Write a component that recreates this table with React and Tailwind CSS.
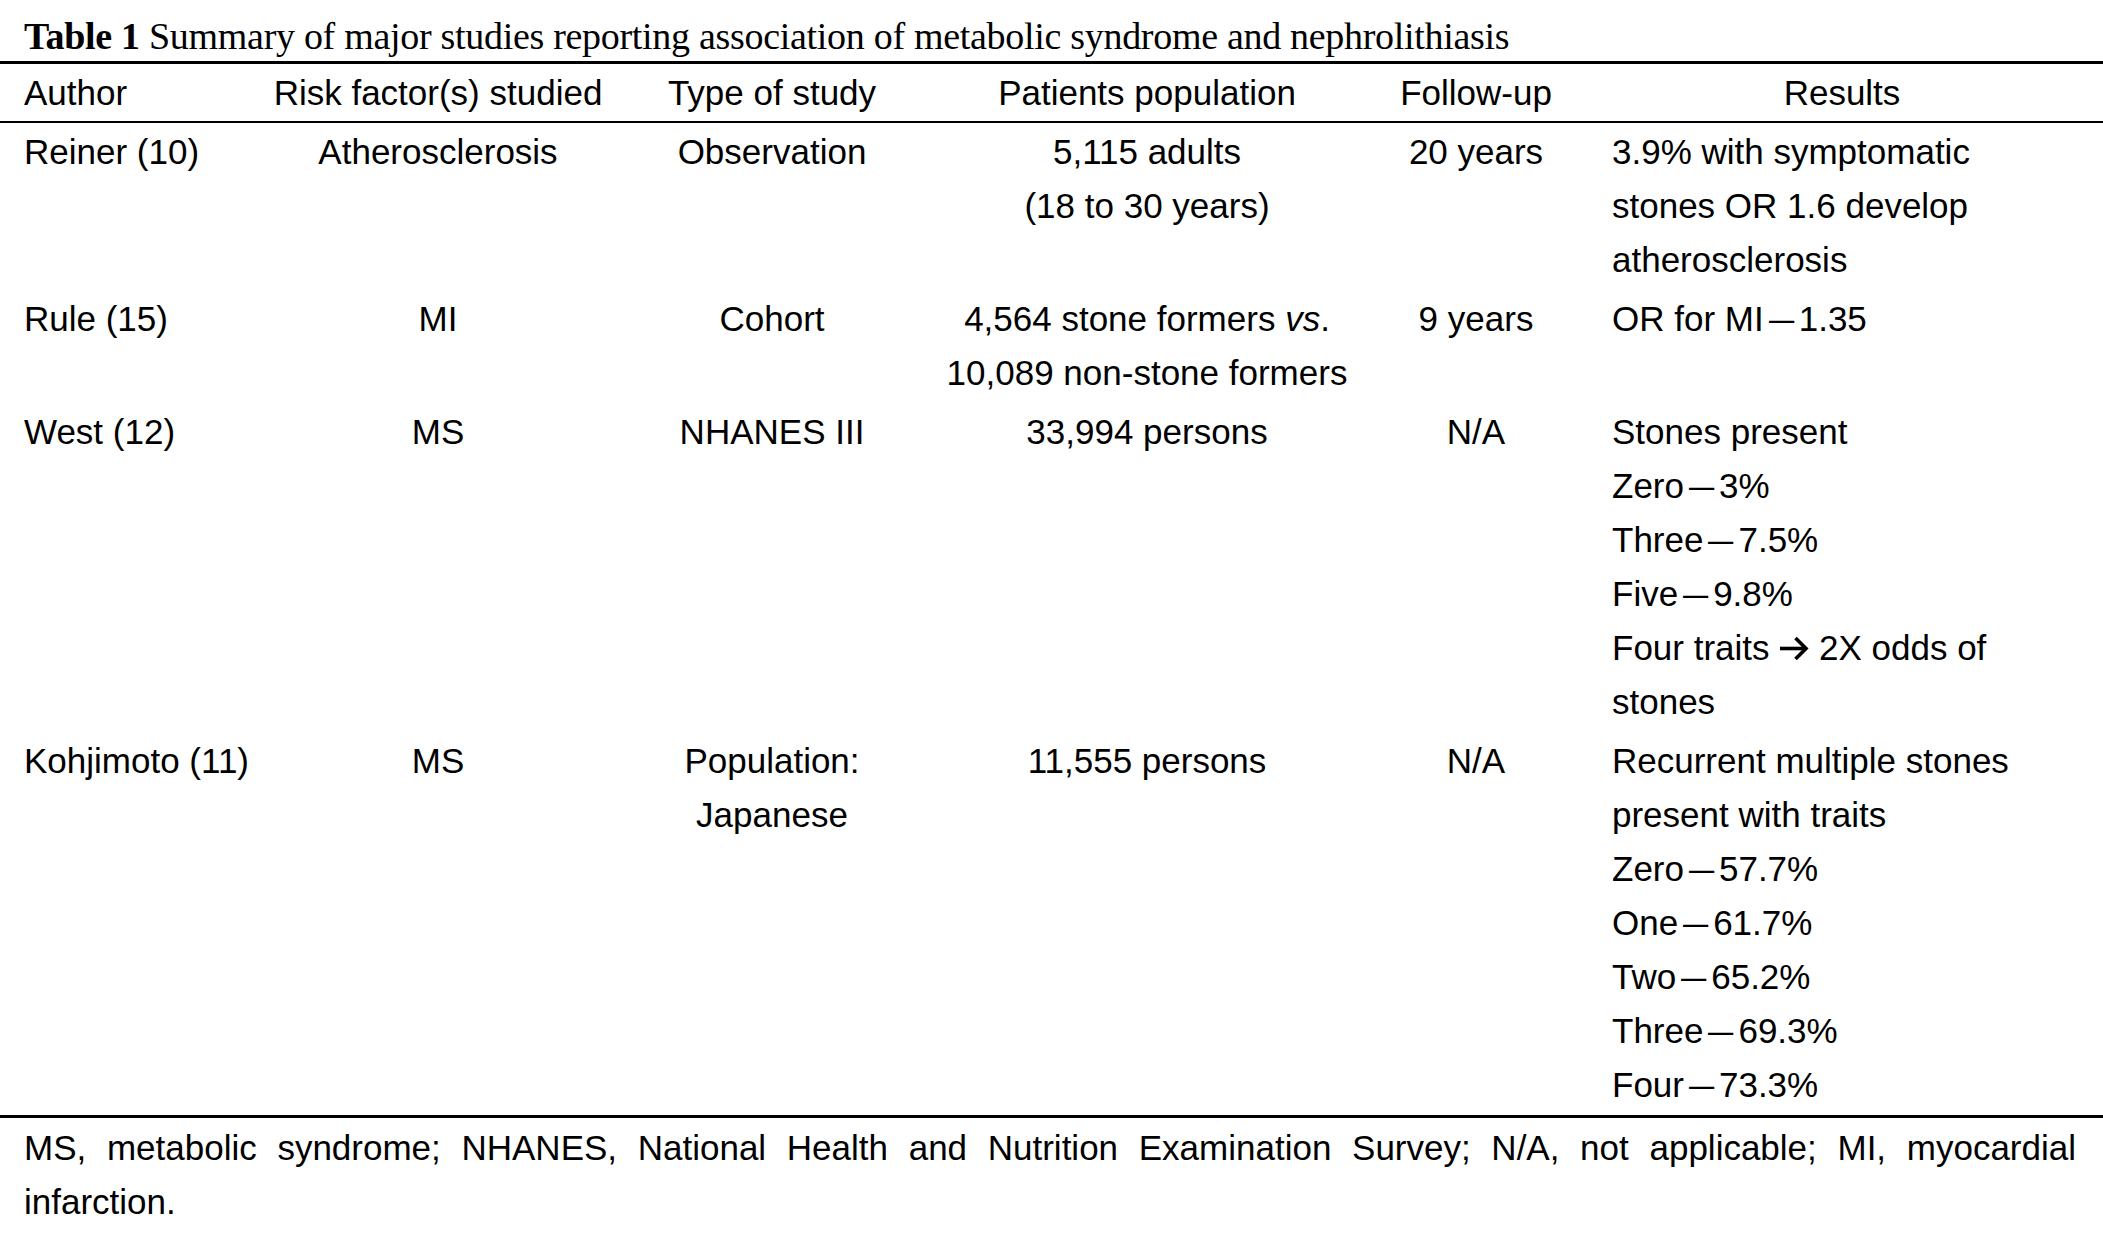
import React from "react"

const Dash = () => (
  <span className="inline-block w-[35px] text-center">
    <span className="inline-block scale-x-[0.72]">{"\u2014"}</span>
  </span>
)

// open chevron arrow, as in the printed table
const Arrow = () => (
  <svg
    viewBox="0 0 30 24"
    className="inline-block align-baseline w-[30px] h-[24px]"
    fill="none"
    stroke="currentColor"
    strokeWidth="3.6"
  >
    <path d="M1 12.5H27" />
    <path d="M16.5 2L27 12.5L16.5 23" />
  </svg>
)

const rows = [
  {
    author: "Reiner (10)",
    risk: "Atherosclerosis",
    type: ["Observation"],
    pop: ["5,115 adults", "(18 to 30 years)"],
    follow: "20 years",
    results: ["3.9% with symptomatic", "stones OR 1.6 develop", "atherosclerosis"],
  },
  {
    author: "Rule (15)",
    risk: "MI",
    type: ["Cohort"],
    pop: [
      <>
        4,564 stone formers <i>vs</i>.
      </>,
      "10,089 non-stone formers",
    ],
    follow: "9 years",
    results: [<>OR for MI<Dash />1.35</>],
  },
  {
    author: "West (12)",
    risk: "MS",
    type: ["NHANES III"],
    pop: ["33,994 persons"],
    follow: "N/A",
    results: [
      "Stones present",
      <>Zero<Dash />3%</>,
      <>Three<Dash />7.5%</>,
      <>Five<Dash />9.8%</>,
      <>Four traits <Arrow /> 2X odds of</>,
      "stones",
    ],
  },
  {
    author: "Kohjimoto (11)",
    risk: "MS",
    type: ["Population:", "Japanese"],
    pop: ["11,555 persons"],
    follow: "N/A",
    results: [
      "Recurrent multiple stones",
      "present with traits",
      <>Zero<Dash />57.7%</>,
      <>One<Dash />61.7%</>,
      <>Two<Dash />65.2%</>,
      <>Three<Dash />69.3%</>,
      <>Four<Dash />73.3%</>,
    ],
  },
]

const Lines = ({ items }) => (
  <>
    {items.map((t, i) => (
      <div key={i} className="whitespace-nowrap">
        {t}
      </div>
    ))}
  </>
)

const App = () => {
  return (
    <div className="w-[2103px] min-h-[1247px] bg-white text-black">
      {/* Caption */}
      <div className="pl-[24px] pt-[12px] pb-[1px] leading-[48px] text-[38px] tracking-[-0.3px] font-['Liberation_Serif',serif] whitespace-nowrap">
        <span className="font-bold">Table 1</span> Summary of major studies reporting association of metabolic syndrome and nephrolithiasis
      </div>

      <table className="table-fixed w-full border-collapse font-['Liberation_Sans',Arial,sans-serif] text-[35px] leading-[54px]">
        <colgroup>
          <col className="w-[255px]" />
          <col className="w-[366px]" />
          <col className="w-[302px]" />
          <col className="w-[448px]" />
          <col className="w-[210px]" />
          <col className="w-[522px]" />
        </colgroup>
        <thead>
          <tr className="border-t-[3px] border-b-[2px] border-black">
            <th className="font-normal text-left pl-[24px] pt-[2px] pb-[1px]">Author</th>
            <th className="font-normal text-center pt-[2px] pb-[1px] whitespace-nowrap">Risk factor(s) studied</th>
            <th className="font-normal text-center pt-[2px] pb-[1px] whitespace-nowrap">Type of study</th>
            <th className="font-normal text-center pt-[2px] pb-[1px] whitespace-nowrap">Patients population</th>
            <th className="font-normal text-center pt-[2px] pb-[1px]">Follow-up</th>
            <th className="font-normal text-center pt-[2px] pb-[1px]">Results</th>
          </tr>
        </thead>
        <tbody>
          {rows.map((r, i) => (
            <tr key={i} className={i === rows.length - 1 ? "border-b-[3px] border-black" : ""}>
              <td className="align-top pl-[24px] pt-[2px] pb-[3px] whitespace-nowrap">{r.author}</td>
              <td className="align-top text-center pt-[2px] pb-[3px]">{r.risk}</td>
              <td className="align-top text-center pt-[2px] pb-[3px]">
                <Lines items={r.type} />
              </td>
              <td className="align-top text-center pt-[2px] pb-[3px]">
                <Lines items={r.pop} />
              </td>
              <td className="align-top text-center pt-[2px] pb-[3px]">{r.follow}</td>
              <td className="align-top pl-[31px] pt-[2px] pb-[3px]">
                <Lines items={r.results} />
              </td>
            </tr>
          ))}
        </tbody>
      </table>

      {/* Footnote */}
      <div className="pl-[24px] pr-[27px] pt-[3px] font-['Liberation_Sans',Arial,sans-serif] text-[35px] leading-[54px]">
        <div className="text-justify [text-align-last:justify]">
          MS, metabolic syndrome; NHANES, National Health and Nutrition Examination Survey; N/A, not applicable; MI, myocardial
        </div>
        <div>infarction.</div>
      </div>
    </div>
  )
}

export default App
